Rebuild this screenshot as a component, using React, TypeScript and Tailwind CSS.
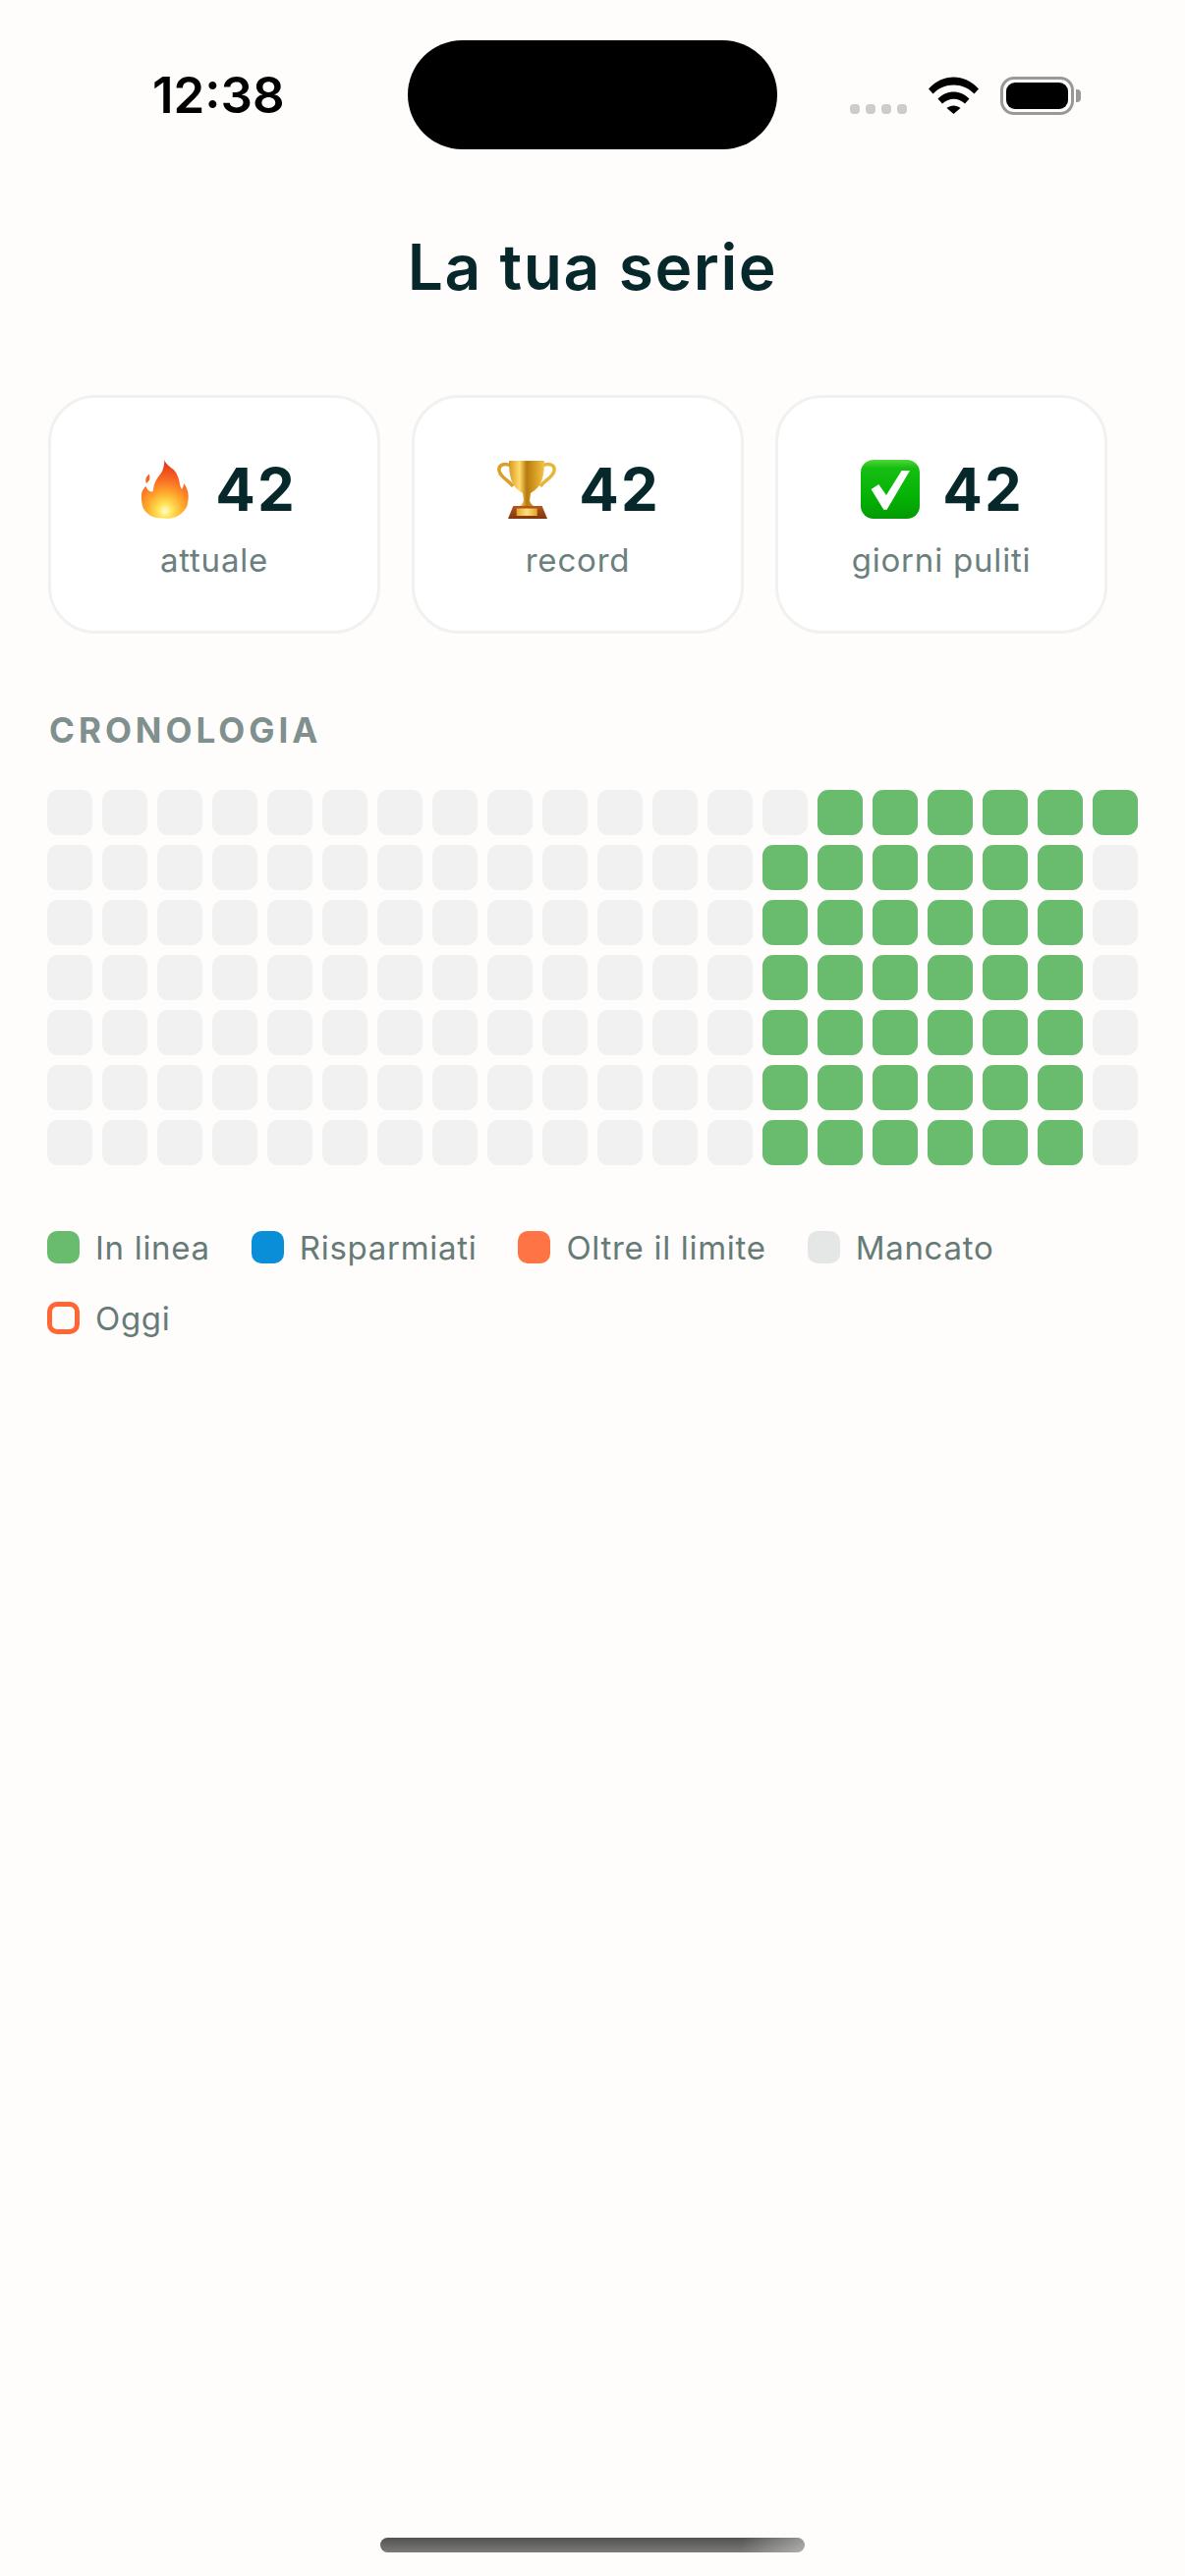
const sans = "font-['Inter','Liberation_Sans',sans-serif]";

const stats = [
  { icon: "fire", value: 42, label: "attuale" },
  { icon: "trophy", value: 42, label: "record" },
  { icon: "check", value: 42, label: "giorni puliti" },
];

const legend = [
  { label: "In linea", swatch: "bg-[#69bb6e]" },
  { label: "Risparmiati", swatch: "bg-[#0b8ed8]" },
  { label: "Oltre il limite", swatch: "bg-[#ff7445]" },
  { label: "Mancato", swatch: "bg-[#e5e7e6]" },
  { label: "Oggi", swatch: "border-[5px] border-[#ff6634]" },
];

function Flame() {
  return (
    <svg className="overflow-visible" width="60" height="60" viewBox="-10 0 60 60">
      <defs>
        <radialGradient id="fl" gradientUnits="userSpaceOnUse" cx="24" cy="52" r="48">
          <stop offset="0" stopColor="#fffcd8" />
          <stop offset="0.14" stopColor="#ffe65a" />
          <stop offset="0.36" stopColor="#ffb02e" />
          <stop offset="0.62" stopColor="#fb7424" />
          <stop offset="1" stopColor="#e8361a" />
        </radialGradient>
      </defs>
      <path d="M23.300 0C25 5 29 7 32.700 10C36.500 14 38.500 20 39 25C39.500 27.500 40.500 29 41 30C42.300 28 43 26 43.300 24C46 28 48 33 47.700 38C47.500 42 47 45 46 48C43 53 39 56.500 34 58.500C30 59.800 26 60 22.700 59.500C17.500 59.500 13 58.800 9.300 57C5 54 2 51 1 47C0 43 -0.200 39 0 35C0.500 32 2 29 4.300 27C5.500 29 6.500 31 8.300 32C10 32.500 11 32.500 11.700 32C12 28 13 25 14.300 22C16 18 19 15 21 12C22.500 8 23.500 4 23.300 0Z" fill="url(#fl)" />
      <path d="M7.700 14.500C6 16 4.500 18 4.300 20C4.200 22 4.500 23 5 24C6.500 22.500 8 21 8.300 20C8.600 18 8.200 16 7.700 14.500Z" fill="#f2652c" />
    </svg>
  );
}

function Trophy() {
  return (
    <svg className="overflow-visible" width="60" height="60" viewBox="-3 0 60 60">
      <defs>
        <linearGradient id="cup" x1="0" x2="1" y1="0" y2="0">
          <stop offset="0" stopColor="#d9991f" />
          <stop offset="0.3" stopColor="#ffdc6a" />
          <stop offset="0.5" stopColor="#b87a10" />
          <stop offset="0.72" stopColor="#d39a22" />
          <stop offset="1" stopColor="#f2c247" />
        </linearGradient>
        <linearGradient id="wood" x1="0" x2="0" y1="0" y2="1">
          <stop offset="0" stopColor="#b5561c" />
          <stop offset="1" stopColor="#7f340e" />
        </linearGradient>
        <linearGradient id="plate" x1="0" x2="1" y1="0" y2="0">
          <stop offset="0" stopColor="#e2a62c" />
          <stop offset="0.5" stopColor="#ffe07a" />
          <stop offset="1" stopColor="#e0a428" />
        </linearGradient>
      </defs>
      <path d="M13 6C6 3 0 5 1 11C2 18 10 20 15 27" fill="none" stroke="#d9a02a" strokeWidth="3.500" />
      <path d="M45 6C52 3 58 5 57 11C56 18 48 20 43 27" fill="none" stroke="#e8b53c" strokeWidth="3.500" />
      <path d="M11 1H47C47 18 44 28 33 34L32 42C33 45 36 47 39 49H19C22 47 25 45 26 42L25 34C14 28 11 18 11 1Z" fill="url(#cup)" />
      <path d="M15.300 47H44.700L50 60H10Z" fill="url(#wood)" />
      <rect x="18.700" y="49.500" width="21" height="7.500" fill="url(#plate)" />
    </svg>
  );
}

function CheckBox() {
  return (
    <svg className="overflow-visible" width="60" height="60" viewBox="-2 0 60 60">
      <defs>
        <linearGradient id="chk" x1="0" x2="0" y1="0" y2="1">
          <stop offset="0" stopColor="#4fd63a" />
          <stop offset="0.14" stopColor="#16be12" />
          <stop offset="0.6" stopColor="#05b405" />
          <stop offset="1" stopColor="#049a04" />
        </linearGradient>
      </defs>
      <rect width="60" height="60" rx="13" fill="url(#chk)" />
      <path d="M10.600 30L18.300 25L26 36L41.600 11H50L26.600 50.700H23.300Z" fill="#fff" />
    </svg>
  );
}

function StatIcon({ name }: { name: string }) {
  if (name === "fire") return <Flame />;
  if (name === "trophy") return <Trophy />;
  return <CheckBox />;
}

function StatusBar() {
  return (
    <div className="flex items-start h-[152px] pt-[41px] pl-[155px] pr-[106px]">
      <div className="w-[260px] mt-[26px] text-[51px] leading-[60px] font-semibold text-black">12:38</div>
      <div className="w-[376px] h-[111px] rounded-[56px] bg-black" />
      <div className="flex items-start mt-[37px] ml-auto">
        <div className="flex gap-[6px] mt-[28px]">
          <div className="w-[10px] h-[10px] rounded-[4px] bg-[#cccccc]" />
          <div className="w-[10px] h-[10px] rounded-[4px] bg-[#cccccc]" />
          <div className="w-[10px] h-[10px] rounded-[4px] bg-[#cccccc]" />
          <div className="w-[10px] h-[10px] rounded-[4px] bg-[#cccccc]" />
        </div>
        <svg className="ml-[22px]" width="51" height="38" viewBox="0 0 51 38">
          <path d="M0 12.500C14 -3.500 37 -3.500 51 12.500L46.500 17.500C35 5.500 16 5.500 4.500 17.500Z" />
          <path d="M9.500 22.500C18.500 13 32.500 13 41.500 22.500L37 27.500C30.500 21 21 21 14 27.500Z" />
          <path d="M18.500 32C22.500 28.500 28.500 28.500 32.500 32L25.500 38Z" />
        </svg>
        <div className="ml-[22px] w-[75px] h-[39px] rounded-[14px] border-[3px] border-[#999999] p-[3px]">
          <div className="w-full h-full rounded-[9px] bg-black" />
        </div>
        <div className="mt-[13px] ml-[2px] w-[5px] h-[13px] rounded-r-[4px] bg-[#999999]" />
      </div>
    </div>
  );
}

export default function App() {
  const cells: string[] = [];
  for (let row = 0; row < 7; row++) {
    for (let col = 0; col < 20; col++) {
      const on = row === 0 ? col >= 14 : col >= 13 && col <= 18;
      cells.push(on ? "bg-[#69bb6e]" : "bg-[#f1f1f1]");
    }
  }

  return (
    <div className={`${sans} w-[1206px] h-[2622px] bg-[#fefdfb] flex flex-col overflow-hidden`}>
      <StatusBar />

      <h1 className="mt-[80px] text-center text-[64px] leading-[80px] font-semibold tracking-[1.600px] text-[#07282b]">La tua serie</h1>

      <div className="flex gap-[32px] pl-[49px] mt-[90px]">
        {stats.map((s) => (
          <div key={s.label} className="w-[338px] h-[243px] rounded-[48px] border-[3px] border-[#f1f1f0] bg-white flex flex-col items-center pt-[63px]">
            <div className="flex items-center gap-[25px] h-[60px]">
              <StatIcon name={s.icon} />
              <span className="text-[60px] leading-[60px] font-bold tracking-[2px] text-[#07282b]">{s.value}</span>
            </div>
            <div className="mt-[20px] text-[33px] leading-[44px] tracking-[0.800px] text-[#6b7f7d]">{s.label}</div>
          </div>
        ))}
      </div>

      <div className="mt-[76px] pl-[50px] text-[35px] leading-[44px] font-bold tracking-[4px] text-[#7f908e]">CRONOLOGIA</div>

      <div className="mt-[39px] ml-[48px] grid grid-cols-[repeat(20,46px)] auto-rows-[46px] gap-[10px]">
        {cells.map((c, i) => (
          <div key={i} className={`rounded-[11px] ${c}`} />
        ))}
      </div>

      <div className="mt-[67px] ml-[48px] w-[1100px] flex flex-wrap gap-x-[42px] gap-y-[39px]">
        {legend.map((l) => (
          <div key={l.label} className="flex items-center gap-[16px] h-[33px]">
            <div className={`w-[33px] h-[33px] rounded-[10px] ${l.swatch}`} />
            <span className="text-[33px] leading-[44px] tracking-[0.700px] text-[#667a78]">{l.label}</span>
          </div>
        ))}
      </div>

      <div className="mt-auto mb-[24px] mx-auto w-[432px] h-[15px] rounded-full bg-[linear-gradient(90deg,transparent_85%,rgba(255,255,255,0.4)_100%),linear-gradient(180deg,#525250,#7a7a7a)]" />
    </div>
  );
}
